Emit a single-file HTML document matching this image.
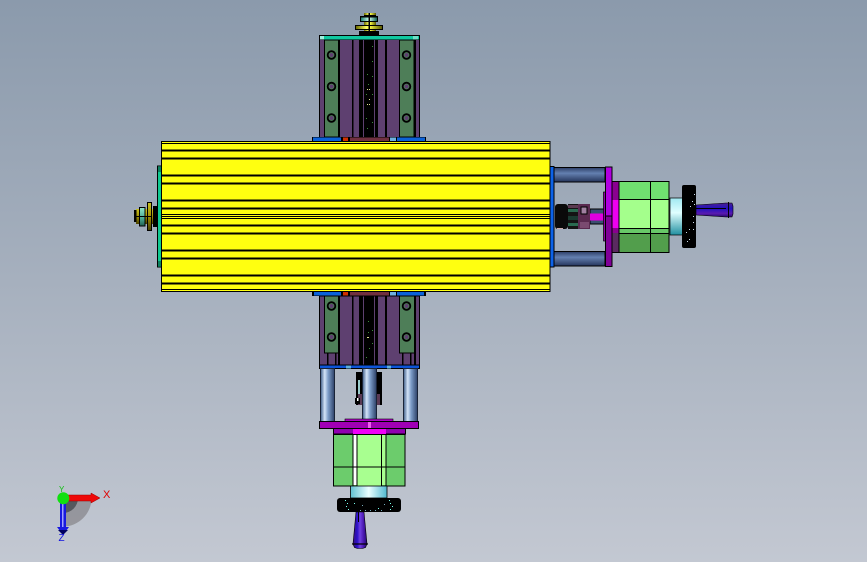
<!DOCTYPE html>
<html><head><meta charset="utf-8"><style>
html,body{margin:0;padding:0;width:867px;height:562px;overflow:hidden}
svg{display:block}
</style></head><body>
<svg width="867" height="562" viewBox="0 0 867 562" xmlns="http://www.w3.org/2000/svg" font-family="Liberation Sans, sans-serif">
<defs>
<linearGradient id="bg" x1="0" y1="0" x2="0" y2="1"><stop offset="0" stop-color="#8b9aac"/><stop offset=".5" stop-color="#a6b0be"/><stop offset="1" stop-color="#c3c8d2"/></linearGradient>
<linearGradient id="cylV" x1="0" y1="0" x2="1" y2="0"><stop offset="0" stop-color="#3c5a86"/><stop offset=".3" stop-color="#d4e4f8"/><stop offset=".55" stop-color="#7c9cc8"/><stop offset="1" stop-color="#2c4066"/></linearGradient>
<linearGradient id="cylH" x1="0" y1="0" x2="0" y2="1"><stop offset="0" stop-color="#2c3e66"/><stop offset=".4" stop-color="#6480b0"/><stop offset="1" stop-color="#24345a"/></linearGradient>
<linearGradient id="neckV" x1="0" y1="0" x2="1" y2="0"><stop offset="0" stop-color="#60c0d0"/><stop offset=".5" stop-color="#eaffff"/><stop offset="1" stop-color="#50b8d0"/></linearGradient>
<linearGradient id="neckH" x1="0" y1="0" x2="0" y2="1"><stop offset="0" stop-color="#a0e8f0"/><stop offset=".4" stop-color="#e0ffff"/><stop offset="1" stop-color="#208fa0"/></linearGradient>
<linearGradient id="hV" x1="0" y1="0" x2="1" y2="0"><stop offset="0" stop-color="#3a1080"/><stop offset=".3" stop-color="#2a10c8"/><stop offset=".5" stop-color="#7040e0"/><stop offset=".75" stop-color="#4a18b0"/><stop offset="1" stop-color="#24086a"/></linearGradient>
<linearGradient id="hH" x1="0" y1="0" x2="0" y2="1"><stop offset="0" stop-color="#4a2090"/><stop offset=".4" stop-color="#2010c0"/><stop offset=".75" stop-color="#5a1ab0"/><stop offset="1" stop-color="#24086a"/></linearGradient>
<linearGradient id="gold" x1="0" y1="0" x2="1" y2="0"><stop offset="0" stop-color="#6a6a00"/><stop offset=".4" stop-color="#ffff60"/><stop offset=".55" stop-color="#f0f040"/><stop offset="1" stop-color="#585800"/></linearGradient>
<linearGradient id="goldH" x1="0" y1="0" x2="0" y2="1"><stop offset="0" stop-color="#c8c020"/><stop offset=".5" stop-color="#a09000"/><stop offset="1" stop-color="#484000"/></linearGradient>
<linearGradient id="tealV" x1="0" y1="0" x2="1" y2="0"><stop offset="0" stop-color="#208070"/><stop offset=".5" stop-color="#d0fff0"/><stop offset="1" stop-color="#106050"/></linearGradient>
<linearGradient id="tealH" x1="0" y1="0" x2="0" y2="1"><stop offset="0" stop-color="#90e8c8"/><stop offset=".6" stop-color="#48a890"/><stop offset="1" stop-color="#206050"/></linearGradient>
</defs>
<rect width="867" height="562" fill="url(#bg)"/>

<!-- TOP BLOCK -->
<g stroke="#000" stroke-width="1">
<rect x="319.500" y="35.500" width="100" height="102" fill="#5e4070"/>
<rect x="324.500" y="40" width="14" height="97" fill="#4e7e58"/>
<rect x="399.500" y="40" width="14.500" height="97" fill="#4e7e58"/>
</g>
<g fill="#000">
<rect x="338" y="40" width="2" height="97"/><rect x="352" y="40" width="1.500" height="97"/><rect x="359" y="40" width="4" height="97"/>
<rect x="385" y="40" width="2" height="97"/><rect x="375" y="40" width="3" height="97"/><rect x="414" y="40" width="2" height="97"/>
<rect x="364" y="40" width="10" height="97"/>
</g>
<rect x="319" y="35" width="101" height="5" fill="#000"/>
<rect x="320" y="36" width="99" height="3.500" fill="#10c8a0"/>
<rect x="320" y="36" width="4" height="3.500" fill="#a0f0e0"/><rect x="413" y="36" width="5" height="3.500" fill="#70e0c8"/>
<g fill="none" stroke="#000" stroke-width="1.800">
<circle cx="331.500" cy="55" r="3.800"/><circle cx="331.500" cy="86.500" r="3.800"/><circle cx="331.500" cy="118" r="3.800"/>
<circle cx="406.500" cy="55" r="3.800"/><circle cx="406.500" cy="86.500" r="3.800"/><circle cx="406.500" cy="118" r="3.800"/>
</g>
<g fill="#5e4070">
<circle cx="331.500" cy="55" r="2"/><circle cx="331.500" cy="86.500" r="2"/><circle cx="331.500" cy="118" r="2"/>
<circle cx="406.500" cy="55" r="2"/><circle cx="406.500" cy="86.500" r="2"/><circle cx="406.500" cy="118" r="2"/>
</g>
<!-- thread specks -->
<g fill="#3c8c3c">
<rect x="372" y="46" width="1" height="1"/><rect x="367" y="74" width="1" height="1"/><rect x="372" y="61" width="1" height="1"/><rect x="372" y="76" width="1" height="1"/><rect x="368" y="84" width="1" height="1"/><rect x="366" y="94" width="1" height="1"/><rect x="372" y="94" width="1" height="1"/><rect x="369" y="99" width="1" height="1"/><rect x="366" y="118" width="1" height="1"/><rect x="372" y="122" width="1" height="1"/><rect x="367" y="128" width="1" height="1"/>
</g>
<g fill="#e0e090"><rect x="367" y="89" width="1" height="1"/><rect x="369" y="89" width="1" height="1"/><rect x="369" y="99" width="1" height="1"/><rect x="369" y="104" width="1" height="1"/><rect x="367" y="104" width="1" height="1"/></g>
<g fill="#5e4070"><rect x="363" y="44" width="1" height="2"/><rect x="363" y="58" width="1" height="2"/><rect x="363" y="72" width="1" height="2"/><rect x="363" y="86" width="1" height="2"/><rect x="363" y="100" width="1" height="2"/><rect x="363" y="114" width="1" height="2"/><rect x="374" y="50" width="1" height="2"/><rect x="374" y="64" width="1" height="2"/><rect x="374" y="78" width="1" height="2"/><rect x="374" y="92" width="1" height="2"/><rect x="374" y="106" width="1" height="2"/><rect x="374" y="120" width="1" height="2"/></g>

<!-- top screw -->
<rect x="359" y="31" width="20" height="4" fill="#000"/>
<rect x="364" y="13" width="12" height="18" fill="url(#gold)"/>
<rect x="364" y="15" width="12" height="2" fill="#000"/>
<rect x="364" y="21" width="12" height="1" fill="#000"/>
<rect x="360" y="16" width="18" height="6" fill="#000"/>
<rect x="361" y="17.500" width="16" height="3.500" fill="url(#tealV)"/>
<rect x="355" y="25" width="28" height="5" fill="#000"/>
<rect x="356" y="26" width="26" height="3" fill="url(#gold)"/>
<rect x="368.500" y="13" width="1.500" height="20" fill="#000"/>

<!-- BOTTOM BLOCK -->
<rect x="319.500" y="296" width="100" height="70" fill="#5e4070" stroke="#000"/>
<g fill="#000">
<rect x="338" y="296" width="2" height="70"/><rect x="352" y="296" width="1.500" height="70"/><rect x="359" y="296" width="4" height="70"/>
<rect x="385" y="296" width="2" height="70"/><rect x="375" y="296" width="3" height="70"/><rect x="414" y="296" width="2" height="70"/>
<rect x="364" y="296" width="10" height="70"/>
<rect x="327" y="353" width="1.500" height="13"/><rect x="335" y="353" width="1.500" height="13"/><rect x="402" y="353" width="1.500" height="13"/><rect x="410" y="353" width="1.500" height="13"/>
</g>
<rect x="324.500" y="296" width="14" height="57" fill="#4e7e58" stroke="#000"/>
<rect x="399.500" y="296" width="15" height="57" fill="#4e7e58" stroke="#000"/>
<g fill="none" stroke="#000" stroke-width="1.800"><circle cx="331.500" cy="306" r="3.800"/><circle cx="331.500" cy="337" r="3.800"/><circle cx="406.500" cy="306" r="3.800"/><circle cx="406.500" cy="337" r="3.800"/></g>
<g fill="#5e4070"><circle cx="331.500" cy="306" r="2"/><circle cx="331.500" cy="337" r="2"/><circle cx="406.500" cy="306" r="2"/><circle cx="406.500" cy="337" r="2"/></g>
<g fill="#3c8c3c"><rect x="368" y="321" width="1" height="1"/><rect x="372" y="330" width="1" height="1"/><rect x="368" y="332" width="1" height="1"/><rect x="372" y="343" width="1" height="1"/><rect x="366" y="357" width="1" height="1"/><rect x="369" y="348" width="1" height="1"/></g>
<g fill="#e0e090"><rect x="367" y="337" width="2" height="1"/></g>
<rect x="319.500" y="365" width="100" height="3.500" fill="#0c54d8" stroke="#000" stroke-width="1"/>
<rect x="346" y="365.500" width="5" height="3" fill="#60b0e0"/><rect x="387" y="365.500" width="4" height="3" fill="#60b0e0"/>

<!-- bottom coupling -->
<rect x="356" y="372" width="26" height="33" fill="#000"/>
<rect x="358" y="394" width="22" height="11" fill="#5a3a55"/>
<rect x="358" y="380" width="2" height="14" fill="#9cc"/>
<rect x="355" y="398" width="5" height="6" fill="#000"/><rect x="357" y="398" width="1.500" height="3" fill="#fff"/>
<!-- cylinders -->
<rect x="320.500" y="368.500" width="14" height="53" fill="url(#cylV)" stroke="#1a2438"/>
<rect x="362.500" y="368.500" width="14" height="53" fill="url(#cylV)" stroke="#1a2438"/>
<rect x="403.500" y="368.500" width="14" height="53" fill="url(#cylV)" stroke="#1a2438"/>

<!-- bottom motor -->
<rect x="345" y="419" width="48" height="3" fill="#b000c8" stroke="#000" stroke-width=".6"/>
<rect x="333.500" y="428" width="72" height="6" fill="#9000b0" stroke="#000"/>
<rect x="353" y="428" width="33" height="6" fill="#f000f8"/>
<rect x="319.500" y="421.500" width="99" height="7" fill="#a000b4" stroke="#000"/>
<rect x="368" y="422" width="3" height="6" fill="#f060f0"/>
<rect x="333.500" y="434.500" width="71.500" height="51.500" fill="#6ccc6c" stroke="#000"/>
<rect x="357" y="435" width="24" height="51" fill="#a8ff90"/>
<rect x="353" y="435" width="4" height="50" fill="#fff"/>
<rect x="381" y="435" width="5" height="50" fill="#a8ff90"/>
<g fill="#000"><rect x="352.500" y="434" width="1" height="52"/><rect x="356.500" y="434" width="1" height="52"/><rect x="381" y="434" width="1" height="52"/><rect x="385.500" y="434" width="1" height="52"/><rect x="333" y="466.500" width="72" height="1"/></g>
<rect x="350.500" y="486" width="36.500" height="12" fill="url(#neckV)" stroke="#000" stroke-width=".8"/>
<rect x="337" y="498" width="64" height="14" rx="3" fill="#000"/>
<g fill="#7fe"><rect x="345" y="500" width="1" height="1"/><rect x="347" y="503" width="1" height="1"/><rect x="346" y="506" width="1" height="1"/><rect x="348" y="509" width="1" height="1"/><rect x="389" y="500" width="1" height="1"/><rect x="390" y="503" width="1" height="1"/><rect x="392" y="506" width="1" height="1"/><rect x="390" y="509" width="1" height="1"/><rect x="354" y="503" width="1" height="1"/><rect x="378" y="508" width="1" height="1"/></g>
<g fill="#7ab"><rect x="360" y="510" width="1" height="1"/><rect x="365" y="510" width="1" height="1"/><rect x="370" y="510" width="1" height="1"/><rect x="375" y="510" width="1" height="1"/><rect x="381" y="510" width="1" height="1"/><rect x="384" y="504" width="1" height="1"/><rect x="362" y="505" width="1" height="1"/></g>
<path d="M356 512h8l3 32l-1.500 3.500l-3 1h-5l-3-1l-1.500-3.500z" fill="url(#hV)" stroke="#000" stroke-width=".6"/>
<path d="M352 544h16" stroke="#000" stroke-width="1.200"/>
<rect x="358" y="512" width="1" height="10" fill="#000"/>

<!-- RIGHT ASSEMBLY -->
<rect x="554" y="167.500" width="51" height="14.500" fill="url(#cylH)" stroke="#000"/>
<rect x="554" y="251.500" width="51" height="14.500" fill="url(#cylH)" stroke="#000"/>
<rect x="590" y="209" width="15" height="15" fill="#3a5070" stroke="#000"/>
<rect x="590" y="213.500" width="15" height="7" fill="#e000e0"/>
<rect x="555" y="204" width="13" height="25" rx="3" fill="#0a0a0a"/>
<rect x="568" y="204" width="10" height="25" fill="#141414"/>
<rect x="568" y="205" width="10" height="3" fill="#5a3a50"/><rect x="568" y="209" width="10" height="3" fill="#2a6a50"/><rect x="568" y="216" width="10" height="4" fill="#1a3a30"/><rect x="568" y="223" width="10" height="3" fill="#2a6a50"/>
<rect x="578" y="204" width="12" height="25" fill="#5a2a50"/>
<rect x="581" y="207" width="6" height="7" fill="#a080a0" stroke="#000"/><rect x="580" y="222" width="9" height="6" fill="#7a4a70"/>
<rect x="557" y="228" width="6" height="1" fill="#caa"/>
<rect x="550" y="166.500" width="4" height="100.500" fill="#0c62e8" stroke="#000" stroke-width="1"/>
<rect x="603.500" y="192" width="3" height="49" fill="#9000a8" stroke="#000" stroke-width=".7"/>
<rect x="605.500" y="167" width="6.500" height="49" fill="#b000e0" stroke="#000"/>
<rect x="605.500" y="216" width="6.500" height="50.500" fill="#800098" stroke="#000"/>
<rect x="612" y="181.500" width="7" height="71" fill="#8a0090" stroke="#000"/>
<rect x="612.500" y="200" width="6" height="28" fill="#ee00f0"/>
<rect x="612.500" y="233" width="6" height="19" fill="#5a2a60"/>
<rect x="619" y="181.500" width="50" height="71" fill="#70e070" stroke="#000"/>
<rect x="619.500" y="199.500" width="49" height="29" fill="#a4ff8c"/>
<rect x="619.500" y="229" width="49" height="4" fill="#68c868"/>
<rect x="619.500" y="233" width="49" height="19" fill="#529e4c"/>
<g fill="#000"><rect x="619" y="199" width="50" height="1"/><rect x="619" y="228" width="50" height="1"/><rect x="619" y="233" width="50" height="1"/><rect x="650" y="181" width="1" height="71"/></g>
<rect x="670" y="198" width="12.500" height="37" fill="url(#neckH)" stroke="#000" stroke-width=".7"/>
<rect x="682" y="185" width="14" height="63" rx="2" fill="#000"/>
<g fill="#cde"><rect x="694" y="194" width="1" height="1"/><rect x="692" y="201" width="1" height="1"/><rect x="694" y="204" width="1" height="1"/><rect x="690" y="206" width="1" height="1"/><rect x="693" y="216" width="1" height="1"/><rect x="689" y="229" width="1" height="1"/><rect x="693" y="229" width="1" height="1"/><rect x="686" y="232" width="1" height="1"/><rect x="689" y="239" width="1" height="1"/><rect x="687" y="241" width="1" height="1"/><rect x="693" y="222" width="1" height="1"/></g>
<path d="M696 205l30-2h6l1 3v8l-1 3h-6l-30-2z" fill="url(#hH)" stroke="#000" stroke-width=".6"/>
<rect x="728" y="202" width="1" height="16" fill="#000"/>
<rect x="696" y="208" width="30" height="1" fill="#000"/>

<!-- MAIN YELLOW BODY -->
<rect x="312" y="137" width="114" height="5" fill="#000"/>
<rect x="313" y="137.500" width="28" height="4" fill="#0c62d8"/><rect x="343" y="137.500" width="5" height="4" fill="#d03000"/>
<rect x="350" y="137.500" width="39" height="4" fill="#703040"/><rect x="390" y="137.500" width="6" height="4" fill="#70b0e0"/><rect x="397" y="137.500" width="28" height="4" fill="#0c62d8"/>
<rect x="312" y="291" width="114" height="5" fill="#000"/>
<rect x="314" y="291.500" width="27" height="4" fill="#0c62d8"/><rect x="343" y="291.500" width="5" height="4" fill="#d03000"/>
<rect x="350" y="291.500" width="39" height="4" fill="#703040"/><rect x="390" y="291.500" width="6" height="4" fill="#70b0e0"/><rect x="397" y="291.500" width="27" height="4" fill="#0c62d8"/>

<rect x="161.500" y="141.500" width="388.500" height="150" fill="#ffff10" stroke="#000"/>
<g fill="#000">
<rect x="161" y="143" width="389" height="1"/>
<rect x="161" y="149.500" width="389" height="2"/><rect x="161" y="157.500" width="389" height="2"/>
<rect x="161" y="174.500" width="389" height="2"/><rect x="161" y="182.500" width="389" height="2"/>
<rect x="161" y="199.500" width="389" height="2"/><rect x="161" y="207.500" width="389" height="2"/>
<rect x="161" y="214" width="389" height="1"/><rect x="161" y="216" width="389" height="1"/><rect x="161" y="218" width="389" height="1"/>
<rect x="161" y="224.500" width="389" height="2"/><rect x="161" y="232.500" width="389" height="2"/>
<rect x="161" y="249.500" width="389" height="2"/><rect x="161" y="257.500" width="389" height="2"/>
<rect x="161" y="274.500" width="389" height="2"/><rect x="161" y="282.500" width="389" height="2"/>
<rect x="161" y="289" width="389" height="1"/>
</g>

<!-- LEFT ASSEMBLY -->
<rect x="157.500" y="166" width="4" height="101" fill="#10c890" stroke="#000"/>
<rect x="158" y="167" width="3" height="5" fill="#0c8060"/><rect x="158" y="261" width="3" height="5" fill="#0c8060"/>
<rect x="153" y="206" width="4" height="21" fill="#000"/>
<rect x="152" y="210" width="2" height="13" fill="#000"/>
<rect x="136" y="209" width="17" height="15" fill="url(#goldH)"/>
<rect x="147" y="202" width="5" height="29" fill="#000"/>
<rect x="148" y="203" width="3" height="27" fill="url(#goldH)"/>
<rect x="139.500" y="207.500" width="5.500" height="18.500" fill="url(#tealH)" stroke="#000"/>
<rect x="134" y="210" width="2.500" height="12" fill="#000"/>
<rect x="135" y="216" width="17" height="1" fill="#000"/>

<!-- AXIS TRIAD -->
<path d="M63 498h28.500a28.500 28.500 0 0 1-28.500 28.500z" fill="#8e8e94" opacity=".85"/>
<path d="M63 498h15a15 15 0 0 1-15 15z" fill="#55585e"/>
<path d="M63 495h28v-2l9 5l-9 5v-2h-28z" fill="#ee0808" stroke="#900" stroke-width=".5"/>
<path d="M60 498h6v29h3l-6 8l-6-8h3z" fill="#1818e0"/>
<rect x="62" y="500" width="1.500" height="27" fill="#a0a0ff"/>
<path d="M58 530h10l-5 5z" fill="#000060"/>
<circle cx="63.300" cy="498.300" r="6" fill="#10e010"/>
<text x="103" y="498" font-size="11" fill="#e00000">X</text>
<text x="59" y="492" font-size="8" fill="#10c010">Y</text>
<text x="58.500" y="541" font-size="10" fill="#1010e0">Z</text>
</svg>
</body></html>
